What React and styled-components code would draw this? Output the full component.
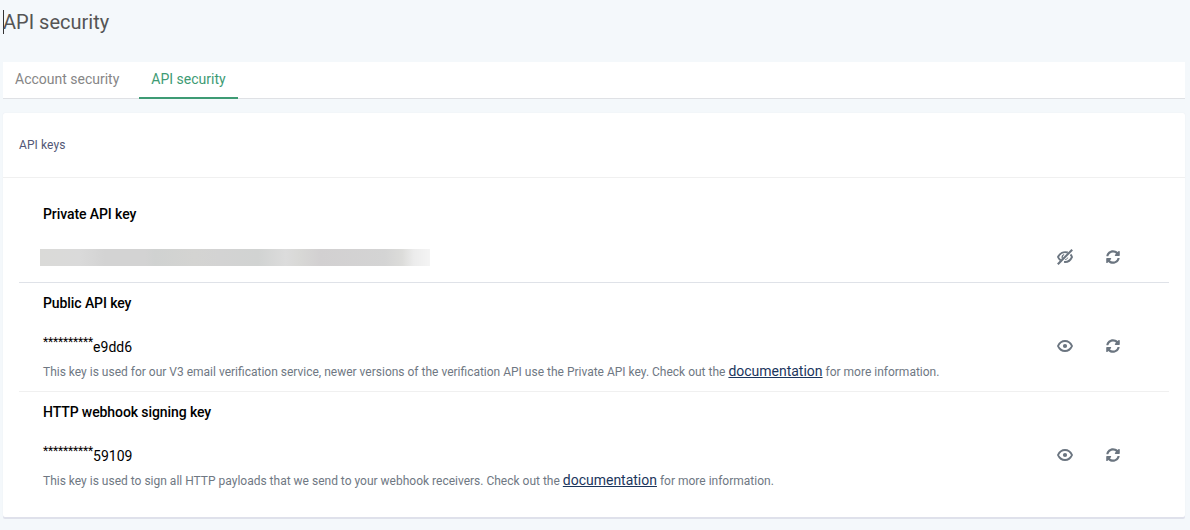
import React from "react";
import styled, { createGlobalStyle } from "styled-components";
import { FaSyncAlt } from "react-icons/fa";

const GlobalStyle = createGlobalStyle`
  * { box-sizing: border-box; }
  body {
    margin: 0;
    background: #f4f8fb;
    font-family: Roboto, "Liberation Sans", sans-serif;
    font-size: 14px;
    color: #000;
  }
`;

const Page = styled.main`
  min-height: 530px;
  padding: 10px 5px 0 3px;
`;

const Title = styled.h1`
  margin: 0 0 28px;
  height: 24px;
  font-size: 20px;
  line-height: 24px;
  font-weight: 400;
  color: #555;
  box-shadow: inset 1px 0 0 #333;
`;

const Tabs = styled.nav`
  display: flex;
  height: 37px;
  background: #fff;
  border-bottom: 1px solid #dfe1e5;
`;

const Tab = styled.a`
  height: 37px;
  padding: 0 12px;
  margin-right: 8px;
  line-height: 35px;
  color: ${(p) => (p.$active ? "#3e9b74" : "#868686")};
  border-bottom: 2px solid ${(p) => (p.$active ? "#3e9b74" : "transparent")};
`;

const Card = styled.section`
  height: 404px;
  margin-top: 14px;
  background: #fff;
  border-radius: 2px;
  box-shadow: 0 2px 0 #dfe1eb, 0 0 1px #dfe3ea;
`;

const CardHeader = styled.header`
  height: 65px;
  padding-left: 16px;
  line-height: 64px;
  font-size: 12px;
  letter-spacing: 0.1px;
  color: #525775;
  border-bottom: 1px solid #f0f0f0;
`;

const KeyList = styled.div`
  padding: 16px 16px 0;
`;

const KeyRow = styled.article`
  height: ${(p) => p.$height}px;
  padding: 10px 24px 0;
  border-bottom: 1px solid ${(p) => p.$line};
`;

const KeyName = styled.h2`
  margin: 0;
  font-size: 14px;
  line-height: 21px;
  font-weight: 500;
  letter-spacing: -0.09px;
`;

const KeyLine = styled.div`
  display: flex;
  align-items: center;
  justify-content: space-between;
  height: 24px;
  margin-top: 20px;
`;

const KeyValue = styled.div`
  line-height: 20px;
  padding-top: 2px;
`;

const Mask = styled.sup`
  font-size: 12px;
  line-height: 0;
  letter-spacing: -0.16px;
  vertical-align: super;
`;

const Redacted = styled.div`
  width: 390px;
  height: 17px;
  margin-left: -3px;
  background: linear-gradient(90deg, #dadad8 0, #dadada 40px, #d3d3d3 65px, #d3d3d3 105px, #d0d2d1 115px, #d4d4d2 155px, #d3d3d3 180px, #d1d3d2 218px, #dcdcdc 246px, #d8d8d6 260px, #d2d0d1 280px, #d4d4d4 345px, #dcdcda 362px, #ececec 374px, #f4f4f4 390px);
`;

const Actions = styled.div`
  display: flex;
  gap: 32px;
  margin-right: 24px;
`;

const IconButton = styled.button`
  display: flex;
  align-items: center;
  justify-content: center;
  width: 16px;
  height: 16px;
  padding: 0;
  border: 0;
  background: none;
  color: #6b7580;
`;

const Note = styled.p`
  margin: 4px 0 0;
  font-size: 12px;
  line-height: 20px;
  color: #6f7883;
`;

const DocLink = styled.a`
  font-size: 14px;
  line-height: 0;
  letter-spacing: -0.01px;
  color: #1b365d;
  text-decoration: underline;
`;

const Eye = () => (
  <svg width="16" height="16" viewBox="0 0 16 16" fill="none">
    <path d="M1 8C2.500 4.800 5 3 8 3s5.500 1.800 7 5c-1.500 3.200-4 5-7 5S2.500 11.200 1 8Z" stroke="currentColor" strokeWidth="1.800" strokeLinejoin="round" />
    <circle cx="8" cy="8" r="2.100" fill="currentColor" />
  </svg>
);

const EyeOff = () => (
  <svg width="16" height="16" viewBox="0 0 16 16" fill="none" stroke="currentColor">
    <path d="M10.800 3.500C6.500 2.200 2.700 4.300 1 8c.6 1.400 1.500 2.400 2.600 3.300M13.500 5.500c.7.700 1.200 1.600 1.500 2.500-1.600 3.500-4.700 5.300-8 4.900" strokeWidth="1.900" />
    <path d="M5.400 9.600C4.800 7.800 5.500 6.200 7.200 5.500" strokeWidth="1.300" />
    <path d="M8.200 10.600c1.300-.1 2.200-.8 2.500-2" strokeWidth="1" />
    <path d="M.8 15.300 15.200.7" strokeWidth="2.100" />
  </svg>
);

const KeyActions = ({ visible }) => (
  <Actions>
    <IconButton aria-label={visible ? "Hide key" : "Show key"}>
      {visible ? <EyeOff /> : <Eye />}
    </IconButton>
    <IconButton aria-label="Regenerate key"><FaSyncAlt size={14} /></IconButton>
  </Actions>
);

const MaskedKey = ({ ending }) => (
  <KeyValue><Mask>**********</Mask>{ending}</KeyValue>
);

export default function App() {
  return (
    <Page>
      <GlobalStyle />
      <Title>API security</Title>
      <Tabs>
        <Tab>Account security</Tab>
        <Tab $active>API security</Tab>
      </Tabs>
      <Card>
        <CardHeader>API keys</CardHeader>
        <KeyList>
          <KeyRow $height={89} $line="#dfe2e8">
            <KeyName>Private API key</KeyName>
            <KeyLine><Redacted /><KeyActions visible /></KeyLine>
          </KeyRow>
          <KeyRow $height={109} $line="#f0f0f0">
            <KeyName>Public API key</KeyName>
            <KeyLine><MaskedKey ending="e9dd6" /><KeyActions /></KeyLine>
            <Note>This key is used for our V3 email verification service, newer versions of the verification API use the Private API key. Check out the <DocLink>documentation</DocLink> for more information.</Note>
          </KeyRow>
          <KeyRow $height={109} $line="transparent">
            <KeyName>HTTP webhook signing key</KeyName>
            <KeyLine><MaskedKey ending="59109" /><KeyActions /></KeyLine>
            <Note>This key is used to sign all HTTP payloads that we send to your webhook receivers. Check out the <DocLink>documentation</DocLink> for more information.</Note>
          </KeyRow>
        </KeyList>
      </Card>
    </Page>
  );
}
